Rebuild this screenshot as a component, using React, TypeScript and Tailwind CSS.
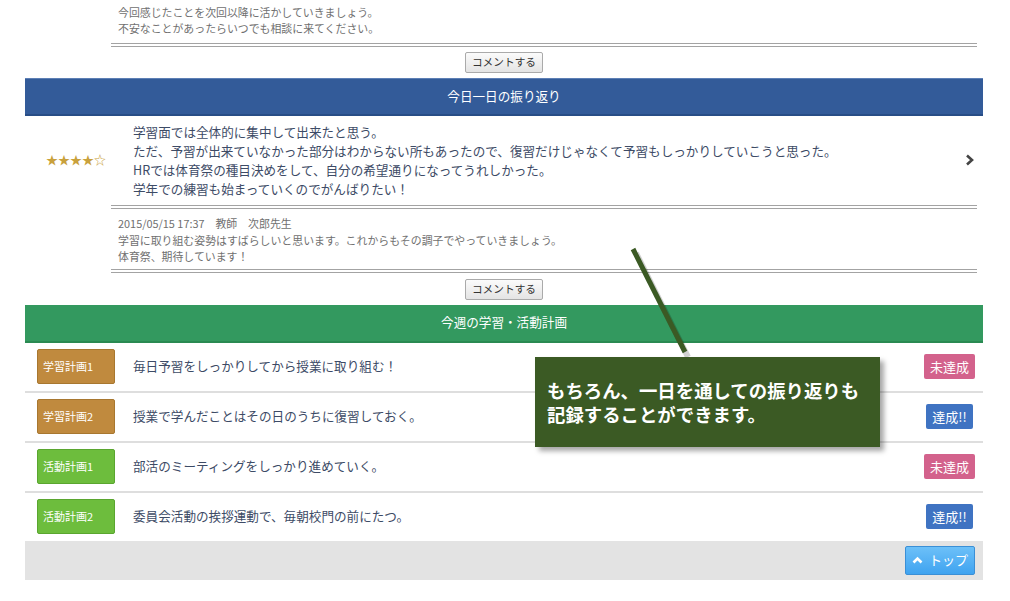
import React from "react";

const font = "font-['Meiryo','Noto_Sans_CJK_JP','Noto_Sans',sans-serif]";

const plans = [
  { label: "学習計画1", kind: "study", text: "毎日予習をしっかりしてから授業に取り組む！", done: false },
  { label: "学習計画2", kind: "study", text: "授業で学んだことはその日のうちに復習しておく。", done: true },
  { label: "活動計画1", kind: "activity", text: "部活のミーティングをしっかり進めていく。", done: false },
  { label: "活動計画2", kind: "activity", text: "委員会活動の挨拶運動で、毎朝校門の前にたつ。", done: true },
];

const CommentButton = () => (
  <div className="flex justify-center">
    <button className="h-[21px] w-[78px] rounded-[2px] border border-[#aaa] bg-gradient-to-b from-[#fbfbfb] to-[#e4e4e4] text-[10.7px] leading-none text-[#333]">
      コメントする
    </button>
  </div>
);

const DoubleLine = () => <div className="h-[4px] border-y border-[#a3a3a3]" />;

const PlanRow = ({ label, kind, text, done }: (typeof plans)[number]) => (
  <div className="flex h-[50px] items-center border-b-2 border-[#dedede] pl-[12px] pr-[8px]">
    <div
      className={
        kind === "study"
          ? "flex h-[35px] w-[78px] items-center rounded-[2px] border border-[#a8772f] bg-[#c08a3e] pl-[5px] text-[11px] text-white"
          : "flex h-[35px] w-[78px] items-center rounded-[2px] border border-[#5aa62f] bg-[#6dbd3d] pl-[5px] text-[11px] text-white"
      }
    >
      {label}
    </div>
    <p className="ml-[18px] flex-1 text-[12.6px] text-[#3d4b66]">{text}</p>
    {done ? (
      <span className="mr-[2px] flex h-[25px] w-[47px] items-center justify-center rounded-[2px] bg-[#3f73c2] text-[13px] text-white">
        達成!!
      </span>
    ) : (
      <span className="flex h-[25px] w-[51px] items-center justify-center rounded-[2px] bg-[#d3628c] text-[13px] text-white">
        未達成
      </span>
    )}
  </div>
);

export default function App() {
  return (
    <div className={`relative h-[601px] w-[1010px] overflow-hidden bg-white ${font}`}>
      <div className="ml-[25px] w-[958px]">
        {/* previous comment, cut off at top */}
        <div className="ml-[86px] mr-[6px]">
          <div className="pl-[7px] pt-[4px] pb-[7px] text-[10.9px] leading-[16px] text-[#707070]">
            <p>今回感じたことを次回以降に活かしていきましょう。</p>
            <p>不安なことがあったらいつでも相談に来てください。</p>
          </div>
          <DoubleLine />
        </div>
        <div className="mt-[5px] mb-[5px]">
          <CommentButton />
        </div>

        {/* daily reflection */}
        <div className="flex h-[38px] items-center justify-center border-t border-[#5d7fb5] border-b-2 border-b-[#284d86] bg-[#335b99] text-[12.6px] text-white">
          今日一日の振り返り
        </div>
        <div className="flex items-center">
          <div className="w-[108px] pl-[21px] text-[12px] text-[#c9a13c]">★★★★☆</div>
          <div className="flex-1 pt-[6px] pb-[6px] text-[12.6px] leading-[19px] text-[#3d4b66]">
            <p>学習面では全体的に集中して出来たと思う。</p>
            <p>ただ、予習が出来ていなかった部分はわからない所もあったので、復習だけじゃなくて予習もしっかりしていこうと思った。</p>
            <p>HRでは体育祭の種目決めをして、自分の希望通りになってうれしかった。</p>
            <p>学年での練習も始まっていくのでがんばりたい！</p>
          </div>
          <svg width="10" height="12" viewBox="0 0 10 12" className="mr-[8px]">
            <path d="M2 1.5 L7 6 L2 10.5" fill="none" stroke="#444" strokeWidth="2.6" />
          </svg>
        </div>
        <div className="ml-[86px] mr-[6px] mt-[1px]">
          <DoubleLine />
          <div className="pl-[7px] pt-[6px] pb-[4px] text-[10.9px] leading-[16.5px] text-[#707070]">
            <p>2015/05/15 17:37　教師　次郎先生</p>
            <p>学習に取り組む姿勢はすばらしいと思います。これからもその調子でやっていきましょう。</p>
            <p>体育祭、期待しています！</p>
          </div>
          <DoubleLine />
        </div>
        <div className="mt-[6px] mb-[5px]">
          <CommentButton />
        </div>

        {/* weekly plan */}
        <div className="flex h-[38px] items-center justify-center border-b-2 border-[#2a8a52] bg-[#33995f] text-[12.6px] text-white">
          今週の学習・活動計画
        </div>
        {plans.map((p) => (
          <PlanRow key={p.label} {...p} />
        ))}
        <div className="-mt-[2px] flex h-[39px] items-center justify-end bg-[#e3e3e3] pr-[8px]">
          <button className="flex h-[29px] w-[70px] items-center justify-center gap-[6px] rounded-[2px] border border-[#3a8fd6] bg-gradient-to-b from-[#6cc0f8] to-[#3ea3f0] text-[13px] text-white">
            <svg width="11" height="8" viewBox="0 0 11 8">
              <path d="M1.5 6.5 L5.5 2.5 L9.5 6.5" fill="none" stroke="white" strokeWidth="2.6" />
            </svg>
            トップ
          </button>
        </div>
      </div>

      {/* annotation */}
      <svg className="absolute left-0 top-0" width="1010" height="601">
        <line x1="636" y1="253" x2="688" y2="357" stroke="#000" strokeOpacity="0.18" strokeWidth="6" />
        <line x1="633" y1="249" x2="685" y2="352" stroke="#3b5a24" strokeWidth="5" />
      </svg>
      <div className="absolute left-[535px] top-[357px] flex h-[90px] w-[345px] flex-col justify-center pl-[12px] text-[18.4px] font-bold leading-[24px] text-white bg-[#3b5a24] shadow-[4px_4px_5px_rgba(0,0,0,0.35)]">
        <p>もちろん、一日を通しての振り返りも</p>
        <p>記録することができます。</p>
      </div>
    </div>
  );
}
